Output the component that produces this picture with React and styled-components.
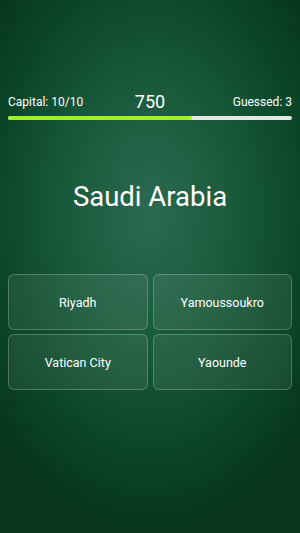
import React from "react";
import styled, { createGlobalStyle } from "styled-components";

const GlobalStyle = createGlobalStyle`
  html, body {
    margin: 0;
    padding: 0;
    height: 100%;
  }
  body {
    font-family: Roboto, "Noto Sans", sans-serif;
    background: #0a3a22;
  }
  #root {
    height: 100%;
  }
`;

const Screen = styled.div`
  width: 300px;
  height: 533px;
  box-sizing: border-box;
  padding: 91px 8px 0;
  background: radial-gradient(
    ellipse 70% 60% at 50% 40%,
    #2b6a50 0%,
    #1a5a3c 40%,
    #0b4527 75%,
    #07351e 100%
  );
  color: #ffffff;
  display: flex;
  flex-direction: column;
`;

const StatusRow = styled.div`
  display: flex;
  justify-content: space-between;
  align-items: center;
  height: 20px;
`;

const Label = styled.span`
  font-size: 12px;
  flex: 1;
  text-align: ${(p) => p.align || "left"};
  padding-top: 2px;
`;

const Score = styled.span`
  font-size: 18px;
  flex: 1;
  text-align: center;
`;

const Track = styled.div`
  margin-top: 5px;
  height: 4px;
  border-radius: 2px;
  background: #e6e6e6;
  overflow: hidden;
`;

const Fill = styled.div`
  height: 100%;
  background: #a6f01a;
  border-radius: 2px;
`;

const Country = styled.h1`
  margin: 60px 0 0;
  font-size: 27.5px;
  font-weight: 400;
  text-align: center;
  line-height: 34px;
`;

const Answers = styled.div`
  margin-top: 60px;
  display: grid;
  grid-template-columns: 1fr 1fr;
  gap: 4px 5px;
`;

const Answer = styled.button`
  height: 56px;
  border-radius: 6px;
  border: 1px solid rgba(255, 255, 255, 0.22);
  background: rgba(255, 255, 255, 0.07);
  color: #ffffff;
  font-family: Roboto, "Noto Sans", sans-serif;
  font-size: 12.5px;
  cursor: pointer;
`;

const options = ["Riyadh", "Yamoussoukro", "Vatican City", "Yaounde"];

export default function App() {
  const progress = 0.648;
  return (
    <>
      <GlobalStyle />
      <Screen>
        <StatusRow>
          <Label>Capital: 10/10</Label>
          <Score>750</Score>
          <Label align="right">Guessed: 3</Label>
        </StatusRow>
        <Track>
          <Fill style={{ width: `${progress * 100}%` }} />
        </Track>
        <Country>Saudi Arabia</Country>
        <Answers>
          {options.map((o) => (
            <Answer key={o}>{o}</Answer>
          ))}
        </Answers>
      </Screen>
    </>
  );
}
